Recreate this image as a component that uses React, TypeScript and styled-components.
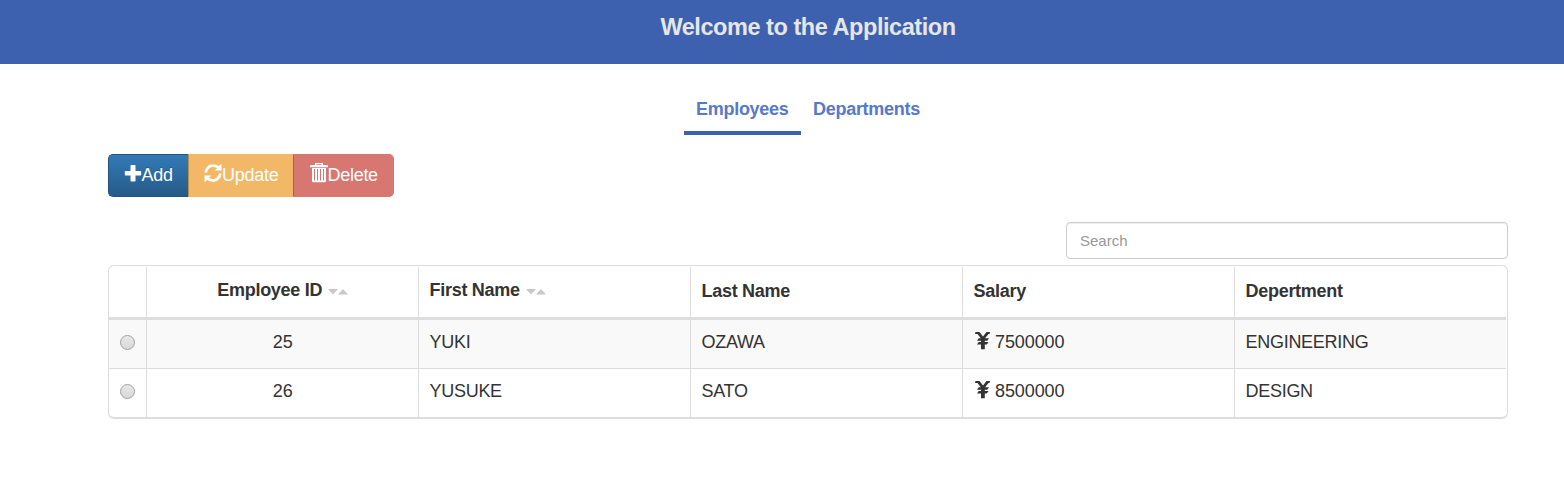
import React from "react";
import styled, { createGlobalStyle, css } from "styled-components";

const GlobalStyle = createGlobalStyle`
  *, *::before, *::after { box-sizing: border-box; }
  body {
    margin: 0;
    background: #fff;
    color: #333;
    font-family: "Liberation Sans", Arial, Helvetica, sans-serif;
    font-size: 18px;
    line-height: 24px;
    letter-spacing: -0.28px;
  }
`;

const Banner = styled.header`
  height: 64px;
  padding: 12px 0 0 52px;
  background: #3d61af;
  text-align: center;
`;

const BannerTitle = styled.h1`
  margin: 0;
  color: #e6e6e6;
  font-size: 23.5px;
  line-height: 30px;
  letter-spacing: -0.45px;
`;

const Page = styled.main`
  width: 1400px;
  margin: 0 0 0 108px;
`;

const Tabs = styled.nav`
  display: flex;
  height: 71px;
  padding-left: 576px;
`;

const Tab = styled.a<{ $active?: boolean }>`
  width: ${(p) => (p.$active ? 117 : 131)}px;
  padding: 33px 0 0 12px;
  color: #5679c8;
  font-weight: bold;
  border-bottom: 4px solid ${(p) => (p.$active ? "#3d61af" : "transparent")};
  white-space: nowrap;
`;

const ButtonGroup = styled.div`
  display: flex;
  margin-top: 19px;
  height: 43px;
`;

const tones = {
  add: css`
    width: 80px;
    background: linear-gradient(#337ab7, #265a88);
    border-color: #245580;
    border-right-width: 0;
    border-radius: 5px 0 0 5px;
    padding-left: 14.5px;
    text-shadow: 0 -1px 0 rgba(0, 0, 0, 0.2);
  `,
  update: css`
    width: 105px;
    background: #f2b868;
    border-color: #f2b868;
    border-left-color: #bd8e46;
    padding-left: 15px;
  `,
  remove: css`
    width: 101px;
    background: #d87672;
    border-color: #d87672;
    border-left-color: #c2573c;
    border-radius: 0 5px 5px 0;
    padding-left: 15.5px;
  `,
};

const ActionButton = styled.button<{ $tone: keyof typeof tones }>`
  display: flex;
  align-items: flex-start;
  padding: 8px 0 0;
  border: 1px solid;
  color: #fff;
  font: inherit;
  letter-spacing: -0.28px;
  white-space: nowrap;
  ${(p) => tones[p.$tone]}
`;

const ButtonIcon = styled.svg`
  flex: none;
  width: 18px;
  height: 20px;
  fill: currentColor;
`;

const SearchRow = styled.div`
  display: flex;
  justify-content: flex-end;
  margin-top: 25px;
`;

const SearchInput = styled.input`
  width: 442px;
  height: 37px;
  padding: 6px 13px;
  border: 1px solid #ccc;
  border-radius: 4px;
  box-shadow: inset 0 1px 1px rgba(0, 0, 0, 0.075);
  font: 15px "Liberation Sans", Arial, sans-serif;
  &::placeholder { color: #999; opacity: 1; }
`;

const Grid = styled.section`
  margin-top: 6px;
  height: 154px;
  padding: 1px 1px 0 0;
  border: 1px solid #ddd;
  border-bottom-width: 2px;
  border-radius: 6px;
`;

const Row = styled.div<{ $head?: boolean; $striped?: boolean }>`
  display: grid;
  grid-template-columns: 37px repeat(4, 272px) 272px;
  height: ${(p) => (p.$head ? 53 : p.$striped ? 49 : 48)}px;
  background: ${(p) => (p.$striped ? "#f9f9f9" : "transparent")};
  border-bottom: ${(p) => (p.$head ? "3px" : p.$striped ? "1px" : "0")} solid #ddd;
  font-weight: ${(p) => (p.$head ? "bold" : "normal")};
`;

const Cell = styled.div<{ $center?: boolean; $numeric?: boolean; $top?: number }>`
  padding: ${(p) => p.$top ?? 10}px 10px 0 10.5px;
  border-left: 1px solid #ddd;
  text-align: ${(p) => (p.$center ? "center" : "left")};
  letter-spacing: ${(p) => (p.$numeric ? "-0.1px" : "inherit")};
  white-space: nowrap;
  &:first-child { border-left: 0; padding: 0; }
`;

const Radio = styled.span`
  display: block;
  width: 15px;
  height: 15px;
  margin: 15px 0 0 11px;
  border: 1px solid #a0a0a0;
  border-radius: 50%;
  background: linear-gradient(#e8e8e8, #d8d8d8);
`;

const SortMark = styled.svg`
  width: 20px;
  height: 6px;
  margin-left: 6px;
  vertical-align: 1px;
  fill: #c8c8c8;
`;

const YenMark = styled.svg`
  width: 18px;
  height: 18px;
  margin-right: 3.5px;
  vertical-align: -2px;
  fill: currentColor;
`;

const Sort = () => (
  <SortMark viewBox="0 0 20 6">
    <path d="M0 0h10L5.500 5h-1zM10 5.500h10L15.500.5h-1z" />
  </SortMark>
);

const Yen = () => (
  <YenMark viewBox="0 0 18 18">
    <path d="M1.500 0H5.500L9 4.500 12.500 0H16L15.500 2H14.500L11 6.300H15L13.300 8.800H10.800V10H14.500L12.800 12.500H10.800V17.300H7V12.500H3L4.700 10H7V8.800H3L4.700 6.300H6.800L3.500 2H1z" />
  </YenMark>
);

const employees = [
  { id: 25, first: "YUKI", last: "OZAWA", salary: 7500000, department: "ENGINEERING" },
  { id: 26, first: "YUSUKE", last: "SATO", salary: 8500000, department: "DESIGN" },
];

export default function App() {
  return (
    <>
      <GlobalStyle />
      <Banner>
        <BannerTitle>Welcome to the Application</BannerTitle>
      </Banner>
      <Page>
        <Tabs>
          <Tab $active>Employees</Tab>
          <Tab>Departments</Tab>
        </Tabs>
        <ButtonGroup>
          <ActionButton $tone="add">
            <ButtonIcon viewBox="0 0 18 20">
              <path d="M7.200 2h3.600q.7 0 .7.700V8h5q.7 0 .7.700v3.100q0 .7-.7.700h-5v5.300q0 .7-.7.700H7.200q-.7 0-.7-.7v-5.300h-5q-.7 0-.7-.7V8.700q0-.7.700-.7h5V2.700q0-.7.700-.7z" />
            </ButtonIcon>
            Add
          </ActionButton>
          <ActionButton $tone="update">
            <ButtonIcon viewBox="0 0 18 20">
              <path d="M.5 9.500C1 4.500 4.500 1.200 9 1.200q3.200 0 5.700 1.800L17.500.8V7.500h-6.700l2.200-2.300Q11.300 4 9 4C5.900 4 3.700 6 3.100 9.500zM17.500 10.500C17 15.500 13.500 18.800 9 18.800q-3.200 0-5.700-1.800L.5 19.200V12.500h6.700L5 14.800Q6.700 16 9 16C12.100 16 14.300 14 14.900 10.500z" />
            </ButtonIcon>
            Update
          </ActionButton>
          <ActionButton $tone="remove">
            <ButtonIcon viewBox="0 0 18 20">
              <path fillRule="evenodd" d="M5 2V.6Q5 0 5.600 0h6.800Q13 0 13 .6V2h4q1 0 1 1v1.200H0V3Q0 2 1 2zM6.500 2h5v-.8h-5zM2 5h14v13q0 1.200-1.200 1.200H3.200Q2 19.200 2 18zM4 6v11.500h1V6zM7 6v11.500h1V6zM10 6v11.500h1V6zM13 6v11.500h1V6z" />
            </ButtonIcon>
            Delete
          </ActionButton>
        </ButtonGroup>
        <SearchRow>
          <SearchInput placeholder="Search" />
        </SearchRow>
        <Grid>
          <Row $head>
            <Cell />
            <Cell $center $top={11}>Employee ID<Sort /></Cell>
            <Cell $top={11}>First Name<Sort /></Cell>
            <Cell $top={12}>Last Name</Cell>
            <Cell $top={12}>Salary</Cell>
            <Cell $top={12}>Depertment</Cell>
          </Row>
          {employees.map((e, i) => (
            <Row key={e.id} $striped={i % 2 === 0}>
              <Cell><Radio /></Cell>
              <Cell $center $numeric>{e.id}</Cell>
              <Cell>{e.first}</Cell>
              <Cell>{e.last}</Cell>
              <Cell $numeric><Yen />{e.salary}</Cell>
              <Cell>{e.department}</Cell>
            </Row>
          ))}
        </Grid>
      </Page>
    </>
  );
}
